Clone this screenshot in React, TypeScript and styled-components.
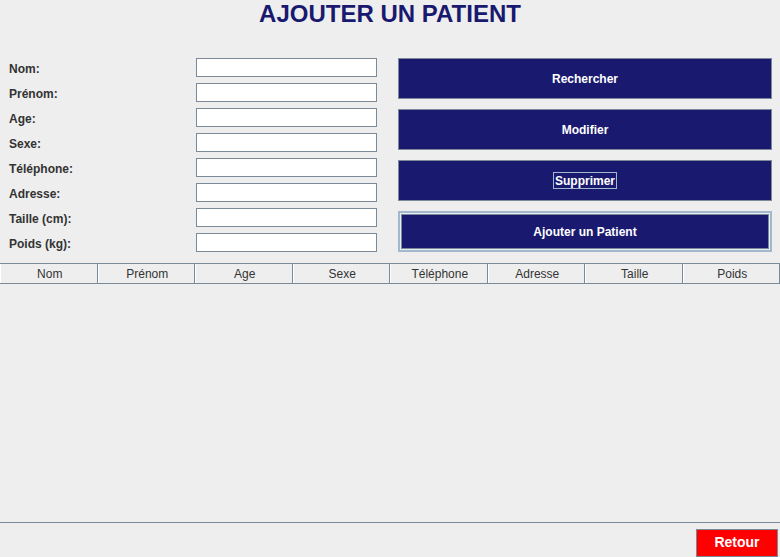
import React from "react";
import styled, { createGlobalStyle } from "styled-components";

const GlobalStyle = createGlobalStyle`
  html, body { margin: 0; padding: 0; background: #eeeeee; }
  body { font-family: "Liberation Sans", Arial, sans-serif; }
  * { box-sizing: border-box; }
`;

const Page = styled.div`
  width: 780px;
  height: 557px;
  display: flex;
  flex-direction: column;
  background: #eeeeee;
  overflow: hidden;
`;

const Title = styled.h1`
  margin: 0;
  height: 27px;
  line-height: 28px;
  text-align: center;
  font-size: 24px;
  font-weight: bold;
  color: #191970;
`;

const Content = styled.div`
  margin-top: 31px;
  display: flex;
  gap: 21px;
  padding-left: 9px;
`;

const Form = styled.div`
  display: grid;
  grid-template-columns: 187px 181px;
  grid-auto-rows: 19px;
  row-gap: 6px;
`;

const Label = styled.label`
  font-size: 12px;
  font-weight: bold;
  color: #333333;
  display: flex;
  align-items: center;
  padding-top: 3px;
`;

const Field = styled.input`
  width: 181px;
  height: 19px;
  margin: 0;
  padding: 0 3px;
  border: 1px solid #7a8a99;
  background: #ffffff;
  font-family: inherit;
  font-size: 12px;
  outline: none;
`;

const Actions = styled.div`
  width: 374px;
  display: flex;
  flex-direction: column;
  gap: 10px;
`;

const ActionButton = styled.button<{ $selected?: boolean }>`
  height: 41px;
  margin: 0;
  padding: 0;
  display: flex;
  align-items: center;
  justify-content: center;
  background: #191970;
  color: #ffffff;
  font-family: inherit;
  font-size: 12px;
  font-weight: bold;
  border: ${(p) => (p.$selected ? "2px solid #a3b8cc" : "1px solid #7a8a99")};
  box-shadow: ${(p) =>
    p.$selected ? "inset 0 0 0 1px #e6edf4, inset 0 0 0 2px #7a8a99" : "none"};
  cursor: pointer;
`;

const FocusText = styled.span<{ $focused?: boolean }>`
  display: inline-flex;
  align-items: center;
  height: 17px;
  padding: 0 1px;
  border: 1px solid ${(p) => (p.$focused ? "#a3b8cc" : "transparent")};
`;

const TablePane = styled.div`
  margin-top: 11px;
  flex: 1;
  border-top: 1px solid #7a8a99;
  border-bottom: 1px solid #7a8a99;
  display: flex;
  flex-direction: column;
`;

const HeaderRow = styled.div`
  display: grid;
  grid-template-columns: repeat(8, 1fr);
  height: 20px;
  border-bottom: 1px solid #7a8a99;
`;

const HeaderCell = styled.div`
  display: flex;
  align-items: center;
  justify-content: center;
  font-size: 12px;
  color: #333333;
  border-left: 1px solid #ffffff;
  border-right: 1px solid #7a8a99;
  padding-top: 1px;
  padding-left: 2px;
`;

const Footer = styled.div`
  height: 34px;
  display: flex;
  justify-content: flex-end;
  align-items: flex-start;
  padding-top: 6px;
  padding-right: 2px;
`;

const BackButton = styled.button`
  width: 82px;
  height: 28px;
  margin: 0;
  padding: 0 0 3px;
  background: #ff0000;
  color: #ffffff;
  border: 1px solid #7a8a99;
  font-family: inherit;
  font-size: 14px;
  font-weight: bold;
  cursor: pointer;
`;

const fields = [
  "Nom:",
  "Prénom:",
  "Age:",
  "Sexe:",
  "Téléphone:",
  "Adresse:",
  "Taille (cm):",
  "Poids (kg):",
];

const columns = ["Nom", "Prénom", "Age", "Sexe", "Téléphone", "Adresse", "Taille", "Poids"];

export default function App() {
  return (
    <>
      <GlobalStyle />
      <Page>
        <Title>AJOUTER UN PATIENT</Title>
        <Content>
          <Form>
            {fields.map((f) => (
              <React.Fragment key={f}>
                <Label>{f}</Label>
                <Field type="text" />
              </React.Fragment>
            ))}
          </Form>
          <Actions>
            <ActionButton>Rechercher</ActionButton>
            <ActionButton>Modifier</ActionButton>
            <ActionButton>
              <FocusText $focused>Supprimer</FocusText>
            </ActionButton>
            <ActionButton $selected>Ajouter un Patient</ActionButton>
          </Actions>
        </Content>
        <TablePane>
          <HeaderRow>
            {columns.map((c) => (
              <HeaderCell key={c}>{c}</HeaderCell>
            ))}
          </HeaderRow>
        </TablePane>
        <Footer>
          <BackButton>Retour</BackButton>
        </Footer>
      </Page>
    </>
  );
}
